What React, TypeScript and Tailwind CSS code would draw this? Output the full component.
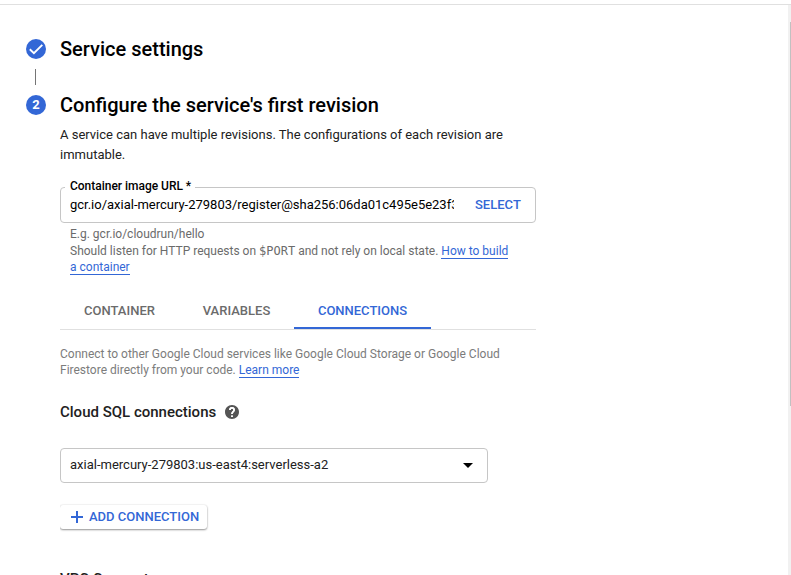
import type { ReactNode } from "react";

function Link({ children }: { children: ReactNode }) {
  return (
    <a className="inline-block h-[14px] border-b border-[#3367d6] leading-[12px] text-[#3367d6]">{children}</a>
  );
}

function Badge({ children }: { children: ReactNode }) {
  return (
    <span className="flex size-5 shrink-0 items-center justify-center rounded-full bg-[#3367d6] text-[13px] font-bold text-white">
      {children}
    </span>
  );
}

function StepTitle({ badge, title }: { badge: ReactNode; title: string }) {
  return (
    <div className="flex h-6 items-center gap-[14px]">
      <Badge>{badge}</Badge>
      <h2 className="text-[20px] leading-6 font-medium whitespace-nowrap">{title}</h2>
    </div>
  );
}

export default function App() {
  return (
    <div className="flex h-[575px] w-[791px] flex-col overflow-hidden bg-white pt-1 font-[Roboto,sans-serif] text-black">
      <div className="flex min-h-0 flex-1 border-t border-[#e0e0e0]">
        <main className="min-w-0 flex-1 overflow-hidden pt-8 pl-[26px]">
          <StepTitle
            badge={
              <svg viewBox="0 0 20 20" className="size-5" fill="none" stroke="white" strokeWidth="1.9">
                <path d="M3.8 10.2 7.9 14.2 16.3 5.8" />
              </svg>
            }
            title="Service settings"
          />
          <div className="mt-2 ml-[9px] h-4 w-px bg-[#757575]" />
          <div className="mt-2">
            <StepTitle badge="2" title="Configure the service's first revision" />
          </div>

          <div className="ml-[34px] w-[476px]">
            <p className="mt-2 text-[13px] leading-5 whitespace-nowrap text-[#212121]">
              A service can have multiple revisions. The configurations of each revision are
              <br />
              immutable.
            </p>

            <fieldset className="mt-[13px] h-[45px] rounded-[4px] border border-[#c6c6c6] pl-[4px]">
              <legend className="h-[18px] pr-[4px] pl-[5px] text-[12px] leading-4 font-medium tracking-[-0.02px] whitespace-nowrap">
                Container image URL *
              </legend>
              <div className="flex h-[17px] items-center pl-[5px]">
                <div className="w-[384px] overflow-hidden text-[13px] leading-[17px] tracking-[-0.01px] whitespace-nowrap">
                  gcr.io/axial-mercury-279803/register@sha256:06da01c495e5e23f3
                </div>
                <button className="ml-[21px] text-[13px] font-medium text-[#3367d6]">SELECT</button>
              </div>
            </fieldset>

            <div className="mt-[3px] pl-[10px] text-[12px] whitespace-nowrap text-[#6b6b6b]">
              <p className="h-[17px] leading-4">E.g. gcr.io/cloudrun/hello</p>
              <p className="h-4 leading-4">
                Should listen for HTTP requests on{" "}
                <code className="font-['DejaVu_Sans_Mono',monospace]">$PORT</code> and not rely on local state.{" "}
                <Link>How to build</Link>
              </p>
              <p className="h-4 leading-4">
                <Link>a container</Link>
              </p>
            </div>

            <nav className="mt-[18px] flex h-[37px] border-b border-[#e0e0e0] text-[13px] font-medium text-[#6b6b6b]">
              <span className="flex w-[119px] items-center justify-center">CONTAINER</span>
              <span className="flex w-[115px] items-center justify-center">VARIABLES</span>
              <span className="flex w-[137px] items-center justify-center border-b-2 border-[#3367d6] pt-0.5 text-[#3367d6]">
                CONNECTIONS
              </span>
            </nav>

            <div className="mt-4 text-[12px] leading-4 whitespace-nowrap text-[#7c7c7c]">
              <p className="h-4">Connect to other Google Cloud services like Google Cloud Storage or Google Cloud</p>
              <p className="h-4">
                Firestore directly from your code. <Link>Learn more</Link>
              </p>
            </div>

            <div className="mt-6 flex h-5 items-center gap-[9px]">
              <h3 className="text-[15px] leading-5 font-medium whitespace-nowrap text-[#212121]">Cloud SQL connections</h3>
              <svg viewBox="2 2 20 20" className="size-[14px]" fill="#555">
                <path d="M12 2C6.48 2 2 6.48 2 12s4.48 10 10 10 10-4.480 10-10S17.520 2 12 2zm1 17h-2v-2h2v2zm2.070-7.750-.9.920C13.450 12.900 13 13.500 13 15h-2v-.5c0-1.100.45-2.100 1.170-2.830l1.240-1.260c.37-.36.59-.86.59-1.410 0-1.100-.9-2-2-2s-2 .9-2 2H8c0-2.210 1.790-4 4-4s4 1.790 4 4c0 .88-.36 1.680-.93 2.250z" />
                <path d="M9 9c0-4 6-4 6 0 0 2.500-3 2.500-3 6M12 17v2" fill="none" stroke="white" strokeWidth="2.5" />
              </svg>
            </div>

            <div className="mt-[26px] flex h-[35px] w-[428px] items-center justify-between rounded-[4px] border border-[#c6c6c6] pr-[14px] pb-0.5 pl-[9px] text-[13px] whitespace-nowrap text-[#212121]">
              axial-mercury-279803:us-east4:serverless-a2
              <svg viewBox="0 0 10 5" className="mt-0.5 h-[5px] w-[10px]" fill="#000">
                <path d="M0 0h10L5 5z" />
              </svg>
            </div>

            <div className="mt-[18px] overflow-hidden pt-1 pb-1">
              <button className="flex h-6 w-[147px] items-center gap-[6px] rounded-[3px] pl-[11px] text-[13px] font-medium whitespace-nowrap text-[#3367d6] shadow-[0_1px_2px_rgba(0,0,0,0.4),0_0_2px_rgba(0,0,0,0.12)]">
                <svg viewBox="0 0 12 12" className="size-3" stroke="#3367d6" strokeWidth="2">
                  <path d="M6 0v12M0 6h12" />
                </svg>
                ADD CONNECTION
              </button>
            </div>

            <h3 className="mt-[36px] text-[15px] leading-5 font-medium whitespace-nowrap text-[#212121]">VPC Connector</h3>
          </div>
        </main>
        <div className="flex w-[3px] flex-col items-end bg-[#f1f1f1] pt-[17px]">
          <div className="h-[384px] w-px bg-[#c1c1c1]" />
        </div>
      </div>
    </div>
  );
}
